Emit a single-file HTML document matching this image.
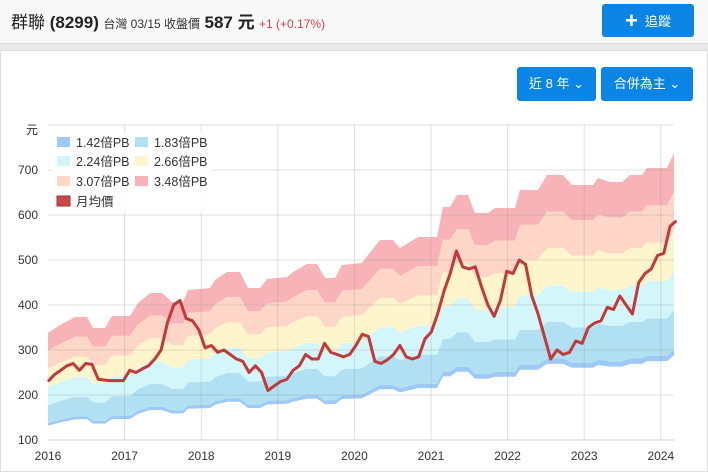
<!DOCTYPE html>
<html><head><meta charset="utf-8">
<style>
body{margin:0;width:708px;height:466px;overflow:hidden;background:#e8e8e8;font-family:"Liberation Sans","Noto Sans CJK TC",sans-serif;position:relative}
.hdr{position:absolute;left:0;top:0;width:708px;height:43px;background:#f8f8f8;border-bottom:1px solid #d8d8d8}
.card{position:absolute;left:0;top:50px;width:706px;height:420px;background:#fff;border:1px solid #ddd}
.t{position:absolute;top:8px;left:11px;white-space:nowrap;color:#222}
.btn{position:absolute;background:#0a85e6;color:#fff;border-radius:3px;font-size:13px;text-align:center}
</style></head><body>
<div class="hdr">
<div class="t"><span style="font-size:17px">群聯 <b>(8299)</b></span> <span style="font-size:12px;color:#333">台灣 03/15 收盤價</span> <b style="font-size:17px">587 元</b> <span style="font-size:12px;color:#d9414a">+1 (+0.17%)</span></div>
<div class="btn" style="left:602px;top:4px;width:92px;height:33px;line-height:33px;font-size:13px"><b style="font-size:22px;vertical-align:-2px">+</b>&nbsp;&nbsp;追蹤</div>
</div>
<div class="card"></div>
<div class="btn" style="left:517px;top:67px;width:79px;height:34px;line-height:34px">近 8 年 ⌄</div>
<div class="btn" style="left:601px;top:67px;width:92px;height:34px;line-height:34px">合併為主 ⌄</div>
<svg id="s" width="708" height="466" style="position:absolute;left:0;top:0" font-family="Liberation Sans, Noto Sans CJK TC, sans-serif" font-size="12"></svg>
<script>
const s=document.getElementById('s');
const X=t=>48+(t-2016)*76.6, Y=v=>440-(v-100)*0.45;
let h='';
for(let v=200;v<=700;v+=100)h+=`<text x="38" y="${Y(v)+4}" text-anchor="end" fill="#333">${v}</text>`;
for(let y=2016;y<=2024;y++)h+=`<text x="${X(y)}" y="460" text-anchor="middle" fill="#333">${y}</text>`;
h+=`<text x="38" y="134" text-anchor="end" fill="#333">元</text><text x="38" y="444" text-anchor="end" fill="#333">100</text>`;
const tp=[[48,333],[60,325],[75,317],[87,317],[93,328],[105,328],[112,316],[130,316],[138,303],[150,293],[162,293],[172,302],[183,302],[188,290],[210,288],[215,280],[227,272],[240,272],[248,288],[260,288],[267,279],[287,277],[293,272],[307,264],[317,264],[325,278],[335,278],[342,265],[362,263],[368,255],[380,240],[393,240],[400,248],[418,237],[437,237],[443,207],[450,207],[457,195],[468,195],[475,213],[488,213],[495,208],[515,208],[520,190],[538,190],[547,175],[563,175],[572,185],[593,185],[598,178],[610,182],[622,182],[630,175],[642,175],[647,168],[667,168],[674,153]];
const Bf=y=>(100+(440-y)/0.45)/3.48;
const m=[1.36,1.42,1.83,2.24,2.66,3.07,3.48],c=['#9dcaf5','#b0e0f2','#d3f6fa','#fff5cc','#fdd6c8','#f8b3b8'];
for(let k=0;k<6;k++){let p='M';tp.forEach(q=>p+=q[0]+','+Y(Bf(q[1])*m[k+1]).toFixed(1)+' ');for(let i=tp.length-1;i>=0;i--)p+=tp[i][0]+','+Y(Bf(tp[i][1])*m[k]).toFixed(1)+' ';h+=`<path d="${p}Z" fill="${c[k]}"/>`;}
for(let v=200;v<=700;v+=100)h+=`<line x1="48" x2="674" y1="${Y(v)}" y2="${Y(v)}" stroke="#999" stroke-opacity="0.3"/>`;
h+=`<line x1="48" x2="674" y1="125" y2="125" stroke="#999" stroke-opacity="0.3"/>`;
for(let y=2017;y<=2024;y++)h+=`<line x1="${X(y)}" x2="${X(y)}" y1="125" y2="440" stroke="#999" stroke-opacity="0.3"/>`;
h+=`<line x1="48" x2="674" y1="440" y2="440" stroke="#ccc"/>`;
const pr=[230,245,255,265,270,255,270,268,235,233,232,232,232,255,250,258,265,280,300,360,400,410,370,365,345,305,310,295,300,290,280,275,250,265,250,210,220,230,235,255,265,290,280,280,315,295,290,285,290,310,335,330,275,270,278,290,310,285,280,285,325,340,380,430,470,520,485,480,485,440,400,375,410,475,470,500,490,420,380,330,280,300,290,295,320,315,350,360,365,395,390,420,400,380,450,470,480,510,515,575,587];
let p='M';pr.forEach((v,i)=>p+=X(2016+i/12*(8.2/8.33)).toFixed(1)+','+Y(v).toFixed(1)+' ');
h+=`<path d="${p}" fill="none" stroke="#c0393b" stroke-width="3" stroke-linejoin="round"/>`;
const L=[['#9dcaf5','1.42倍PB',57,147],['#b0e0f2','1.83倍PB',135,147],['#d3f6fa','2.24倍PB',57,166],['#fff5cc','2.66倍PB',135,166],['#fdd6c8','3.07倍PB',57,186],['#f8b3b8','3.48倍PB',135,186],['#c84848','月均價',57,206]];
h+=`<rect x="52" y="133" width="160" height="80" fill="#fff" opacity="0.85"/>`;
L.forEach(a=>h+=`<rect x="${a[2]}" y="${a[3]-10}" width="13" height="10" fill="${a[0]}" stroke="${a[0]=='#c84848'?'#a03030':'none'}"/><text x="${a[2]+19}" y="${a[3]}" fill="#333" font-size="12.5">${a[1]}</text>`);
s.innerHTML=h;
</script>
</body></html>
